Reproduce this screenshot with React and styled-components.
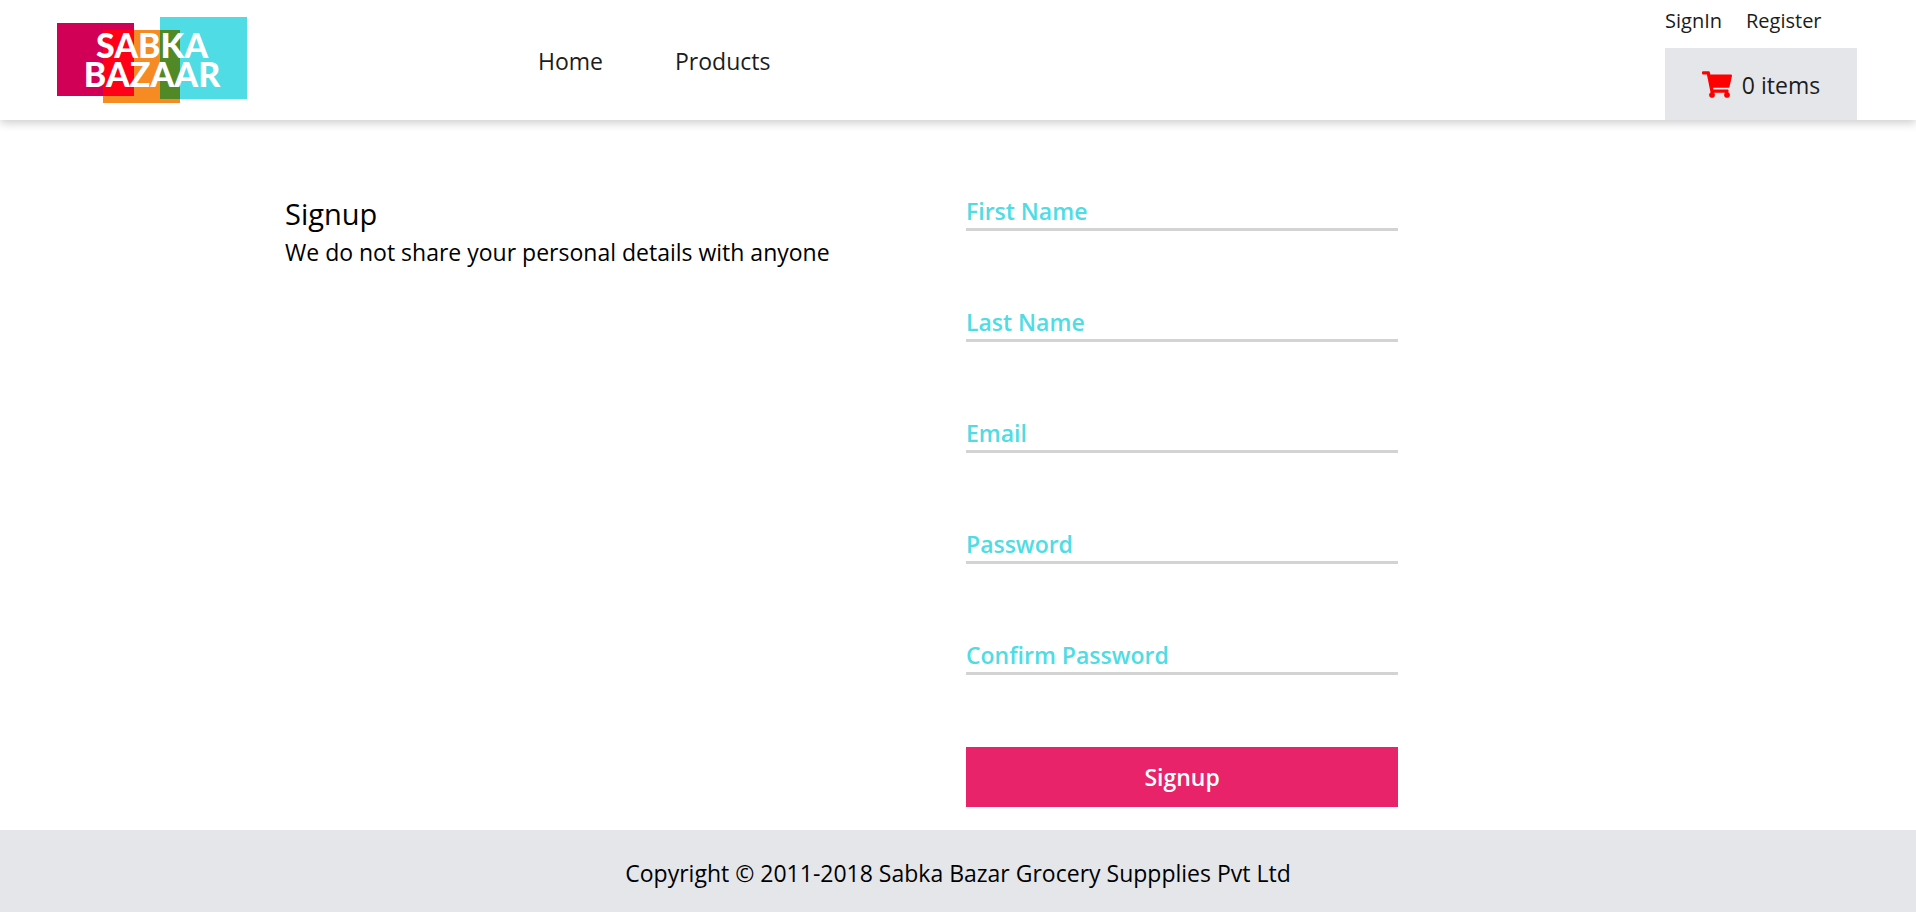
import React from "react";
import styled, { createGlobalStyle } from "styled-components";
import { FaShoppingCart } from "react-icons/fa";

const GlobalStyle = createGlobalStyle`
  *, *::before, *::after { box-sizing: border-box; }
  body {
    margin: 0;
    background: #fff;
    color: #000;
    font-family: "Segoe UI", "Open Sans", "Noto Sans", sans-serif;
    font-size: 23px;
    line-height: 36px;
  }
  h1, p { margin: 0; font-weight: 400; }
  a { color: inherit; text-decoration: none; }
`;

const Page = styled.div`
  min-height: 100vh;
  display: flex;
  flex-direction: column;
`;

const Header = styled.header`
  height: 120px;
  display: flex;
  padding: 0 59px 0 57px;
  color: #1c1c1c;
  box-shadow: 0 3px 9px rgba(0, 0, 0, 0.2);
`;

const LogoLink = styled.a`
  align-self: center;
  display: flex;
`;

const LogoText = styled.text`
  fill: #fff;
  font-family: Lato, sans-serif;
  font-weight: 900;
  font-size: 34px;
  text-anchor: middle;
`;

const Nav = styled.nav`
  flex: 1;
  display: flex;
  align-items: center;
  gap: 72px;
  padding: 2px 0 0 291px;
`;

const Account = styled.div`
  width: 192px;
  display: flex;
  flex-direction: column;
  justify-content: space-between;
`;

const AccountLinks = styled.div`
  display: flex;
  gap: 24px;
  padding-top: 3px;
  font-size: 20px;
`;

const CartButton = styled.button`
  height: 72px;
  display: flex;
  align-items: center;
  justify-content: center;
  gap: 10px;
  border: 0;
  padding: 0;
  background: #e5e6ea;
  color: inherit;
  font: inherit;
  cursor: pointer;
`;

const CartIcon = styled(FaShoppingCart)`
  width: 30px;
  height: 27px;
  color: #f00;
`;

const CartCount = styled.span`
  padding-top: 2px;
`;

const Main = styled.main`
  flex: 1;
  width: 100%;
  max-width: 1346px;
  margin: 0 auto;
  padding: 72px 0 23px;
  display: grid;
  grid-template-columns: 1fr 1fr;
  align-items: start;
  gap: 16px;
`;

const Intro = styled.section`
  padding-top: 2px;
`;

const Title = styled.h1`
  font-size: 29px;
  line-height: 40px;
`;

const Form = styled.form`
  width: 65%;
  display: flex;
  flex-direction: column;
  gap: 72px;
`;

const Field = styled.div`
  display: grid;
  grid-template-rows: 39px;
  & > * { grid-area: 1 / 1; }
`;

const Label = styled.label`
  color: #4fdce4;
  font-weight: 600;
  line-height: 38px;
  pointer-events: none;
  transition: opacity 0.2s;
`;

const Input = styled.input`
  width: 100%;
  height: 39px;
  border: 0;
  border-bottom: 3px solid #d3d3d3;
  padding: 0;
  background: transparent;
  font: inherit;
  outline: none;
  &:focus { border-color: #4fdce4; }
  &:not(:placeholder-shown) + ${Label} { opacity: 0; }
`;

const SubmitButton = styled.button`
  height: 60px;
  border: 0;
  padding: 0;
  background: #e82369;
  color: #fff;
  font: inherit;
  font-weight: 600;
  cursor: pointer;
`;

const Footer = styled.footer`
  padding: 25px 0 21px;
  background: #e5e6ea;
  text-align: center;
`;

const fields = [
  { id: "firstName", label: "First Name", type: "text" },
  { id: "lastName", label: "Last Name", type: "text" },
  { id: "email", label: "Email", type: "email" },
  { id: "password", label: "Password", type: "password" },
  { id: "confirmPassword", label: "Confirm Password", type: "password" },
];

function Logo() {
  return (
    <svg width="190" height="86" viewBox="0 0 190 86" role="img" aria-label="Sabka Bazaar">
      <rect x="0" y="6" width="77" height="73" fill="#d10056" />
      <rect x="46" y="13" width="77" height="73" fill="#f68a23" />
      <rect x="103" y="0" width="87" height="82" fill="#50dce4" />
      <rect x="46" y="13" width="31" height="66" fill="#ff0018" />
      <rect x="103" y="13" width="20" height="69" fill="#518926" />
      <LogoText>
        <tspan x="95" y="41">SABKA</tspan>
        <tspan x="95" y="70">BAZAAR</tspan>
      </LogoText>
    </svg>
  );
}

export default function App() {
  return (
    <>
      <GlobalStyle />
      <Page>
        <Header>
          <LogoLink href="#home"><Logo /></LogoLink>
          <Nav>
            <a href="#home">Home</a>
            <a href="#products">Products</a>
          </Nav>
          <Account>
            <AccountLinks>
              <a href="#signin">SignIn</a>
              <a href="#register">Register</a>
            </AccountLinks>
            <CartButton type="button">
              <CartIcon aria-hidden="true" />
              <CartCount>0 items</CartCount>
            </CartButton>
          </Account>
        </Header>
        <Main>
          <Intro>
            <Title>Signup</Title>
            <p>We do not share your personal details with anyone</p>
          </Intro>
          <Form onSubmit={(event) => event.preventDefault()}>
            {fields.map(({ id, label, type }) => (
              <Field key={id}>
                <Input id={id} name={id} type={type} placeholder=" " />
                <Label htmlFor={id}>{label}</Label>
              </Field>
            ))}
            <SubmitButton type="submit">Signup</SubmitButton>
          </Form>
        </Main>
        <Footer>
          <p>Copyright © 2011-2018 Sabka Bazar Grocery Suppplies Pvt Ltd</p>
        </Footer>
      </Page>
    </>
  );
}
